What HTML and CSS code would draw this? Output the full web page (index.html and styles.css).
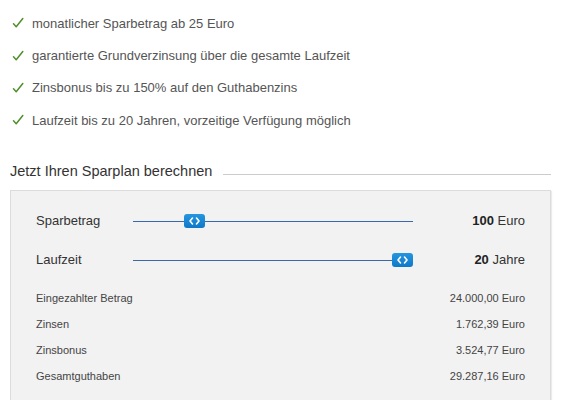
FILE: index.html
```html
<!DOCTYPE html>
<html lang="de">
<head>
<meta charset="utf-8">
<link rel="stylesheet" href="styles.css">
</head>
<body>
<div class="page">
  <ul class="features">
    <li><svg class="check" viewBox="0 0 12 12" width="12" height="12"><path d="M1.5 6.8 L4.2 9.8 L10.8 1.5" fill="none" stroke="#4f8f2a" stroke-width="1.5" stroke-linecap="round" stroke-linejoin="round"/></svg><span>monatlicher Sparbetrag ab 25 Euro</span></li>
    <li><svg class="check" viewBox="0 0 12 12" width="12" height="12"><path d="M1.5 6.8 L4.2 9.8 L10.8 1.5" fill="none" stroke="#4f8f2a" stroke-width="1.5" stroke-linecap="round" stroke-linejoin="round"/></svg><span>garantierte Grundverzinsung über die gesamte Laufzeit</span></li>
    <li><svg class="check" viewBox="0 0 12 12" width="12" height="12"><path d="M1.5 6.8 L4.2 9.8 L10.8 1.5" fill="none" stroke="#4f8f2a" stroke-width="1.5" stroke-linecap="round" stroke-linejoin="round"/></svg><span>Zinsbonus bis zu 150% auf den Guthabenzins</span></li>
    <li><svg class="check" viewBox="0 0 12 12" width="12" height="12"><path d="M1.5 6.8 L4.2 9.8 L10.8 1.5" fill="none" stroke="#4f8f2a" stroke-width="1.5" stroke-linecap="round" stroke-linejoin="round"/></svg><span>Laufzeit bis zu 20 Jahren, vorzeitige Verfügung möglich</span></li>
  </ul>

  <div class="section-head">
    <h2>Jetzt Ihren Sparplan berechnen</h2>
    <div class="rule"></div>
  </div>

  <div class="panel">
    <div class="slider-row">
      <div class="label">Sparbetrag</div>
      <div class="track">
        <div class="handle" style="left: 51px;"><svg viewBox="0 0 21 14" width="21" height="14"><path d="M8.5 4 L6 7 L8.5 10 M12.5 4 L15 7 L12.5 10" fill="none" stroke="#fff" stroke-width="1.6" stroke-linecap="round" stroke-linejoin="round"/></svg></div>
      </div>
      <div class="value"><b>100</b> Euro</div>
    </div>
    <div class="slider-row">
      <div class="label">Laufzeit</div>
      <div class="track">
        <div class="handle" style="left: 259px;"><svg viewBox="0 0 21 14" width="21" height="14"><path d="M8.5 4 L6 7 L8.5 10 M12.5 4 L15 7 L12.5 10" fill="none" stroke="#fff" stroke-width="1.6" stroke-linecap="round" stroke-linejoin="round"/></svg></div>
      </div>
      <div class="value"><b>20</b> Jahre</div>
    </div>
    <div class="results">
      <div class="res-row"><span>Eingezahlter Betrag</span><span>24.000,00 Euro</span></div>
      <div class="res-row"><span>Zinsen</span><span>1.762,39 Euro</span></div>
      <div class="res-row"><span>Zinsbonus</span><span>3.524,77 Euro</span></div>
      <div class="res-row"><span>Gesamtguthaben</span><span>29.287,16 Euro</span></div>
    </div>
  </div>
</div>
</body>
</html>
```

FILE: styles.css
```css
html, body {
  margin: 0;
  padding: 0;
  background: #fff;
}
body {
  font-family: "Liberation Sans", Arial, sans-serif;
  color: #555;
}
.page {
  padding: 0 21px 0 10px;
}
.features {
  list-style: none;
  margin: 0;
  padding: 7px 0 0 2px;
}
.features li {
  display: flex;
  align-items: center;
  height: 32.4px;
  font-size: 13px;
  color: #555;
}
.check {
  width: 12px;
  height: 12px;
  margin-right: 8px;
  flex: none;
}
.section-head {
  display: flex;
  align-items: center;
  margin-top: 24px;
}
.section-head h2 {
  margin: 0;
  font-size: 14.5px;
  font-weight: normal;
  color: #333;
  line-height: 20px;
}
.rule {
  flex: 1;
  height: 1px;
  background: #ccc;
  margin: 8px 0 0 11px;
}
.panel {
  margin-top: 9px;
  background: #f2f2f2;
  border: 1px solid #dcdcdc;
  box-shadow: 1px 1px 1px rgba(0,0,0,0.08);
  padding: 10px 25px 20px 25px;
  height: 240px;
}
.slider-row {
  display: flex;
  align-items: center;
  height: 39px;
}
.label {
  width: 97px;
  font-size: 13px;
  color: #333;
}
.track {
  position: relative;
  width: 280px;
  height: 1px;
  background: #3a67ad;
  margin-top: 3px;
}
.handle {
  position: absolute;
  top: -7px;
  width: 21px;
  height: 14px;
  border-radius: 3px;
  background: linear-gradient(#2596e0, #0f78c8);
  display: flex;
}
.value {
  flex: 1;
  text-align: right;
  font-size: 13px;
  color: #333;
}
.value b {
  color: #222;
}
.results {
  margin-top: 6px;
}
.res-row {
  display: flex;
  justify-content: space-between;
  height: 26px;
  align-items: center;
  font-size: 11px;
  color: #444;
}
```
